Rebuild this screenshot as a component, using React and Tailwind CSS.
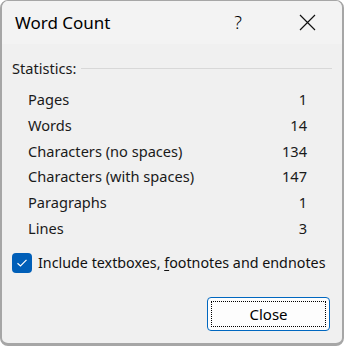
const stats = [
  ['Pages', '1'],
  ['Words', '14'],
  ['Characters (no spaces)', '134'],
  ['Characters (with spaces)', '147'],
  ['Paragraphs', '1'],
  ['Lines', '3'],
];

export default function App() {
  return (
    <div className="w-[344px] h-[346px] bg-white">
      <div
        className="w-[344px] h-[346px] flex flex-col overflow-hidden rounded-[8px] border-t border-l-2 border-r-2 border-b-[3px] border-[#a6a6a6] bg-[#f0f0f0] text-[#1a1a1a]"
        style={{ fontFamily: '"Noto Sans", "Open Sans", sans-serif' }}
      >
        {/* title bar */}
        <div className="h-[43px] shrink-0 flex items-center bg-[#f3f3f3]">
          <span className="ml-[13px] text-[17px] text-black">Word Count</span>
          <span className="ml-auto mr-[57px] text-[18px] font-light text-black">?</span>
          <svg className="mr-[26px]" width="17" height="17" viewBox="0 0 17 17">
            <path d="M1 1 L16 16 M16 1 L1 16" stroke="#111" strokeWidth="1.2" fill="none" />
          </svg>
        </div>

        {/* statistics header */}
        <div className="mt-[12px] ml-[10px] mr-[10px] flex items-center">
          <span className="text-[14.6px] leading-[24px]">Statistics:</span>
          <div className="ml-[5px] flex-1 h-px bg-[#d8d8d8]" />
        </div>

        <div className="mt-[7px] pl-[26px] pr-[35px] flex flex-col">
          {stats.map(([label, value]) => (
            <div key={label} className="h-[25.8px] flex items-center justify-between text-[14.6px]">
              <span>{label}</span>
              <span>{value}</span>
            </div>
          ))}
        </div>

        {/* checkbox */}
        <div className="mt-[10px] ml-[10px] flex items-center">
          <div className="w-[20px] h-[20px] rounded-[4px] bg-[#005fb8] flex items-center justify-center">
            <svg width="12" height="10" viewBox="0 0 12 10">
              <path d="M1.5 5.2 L4.5 8 L10.5 1.8" stroke="white" strokeWidth="1.2" fill="none" />
            </svg>
          </div>
          <span className="ml-[6px] text-[14.3px] text-[#111]">
            Include textboxes, <span className="underline underline-offset-2">f</span>ootnotes and endnotes
          </span>
        </div>

        {/* close button */}
        <div className="mt-auto mb-[12px] mr-[12px] flex justify-end">
          <button className="w-[123px] h-[34px] rounded-[4px] border border-[#0067c0] bg-[#fdfdfd] p-[3px]">
            <div className="w-full h-full flex items-center justify-center border border-dotted border-black text-[15px] text-black">
              Close
            </div>
          </button>
        </div>
      </div>
    </div>
  );
}
